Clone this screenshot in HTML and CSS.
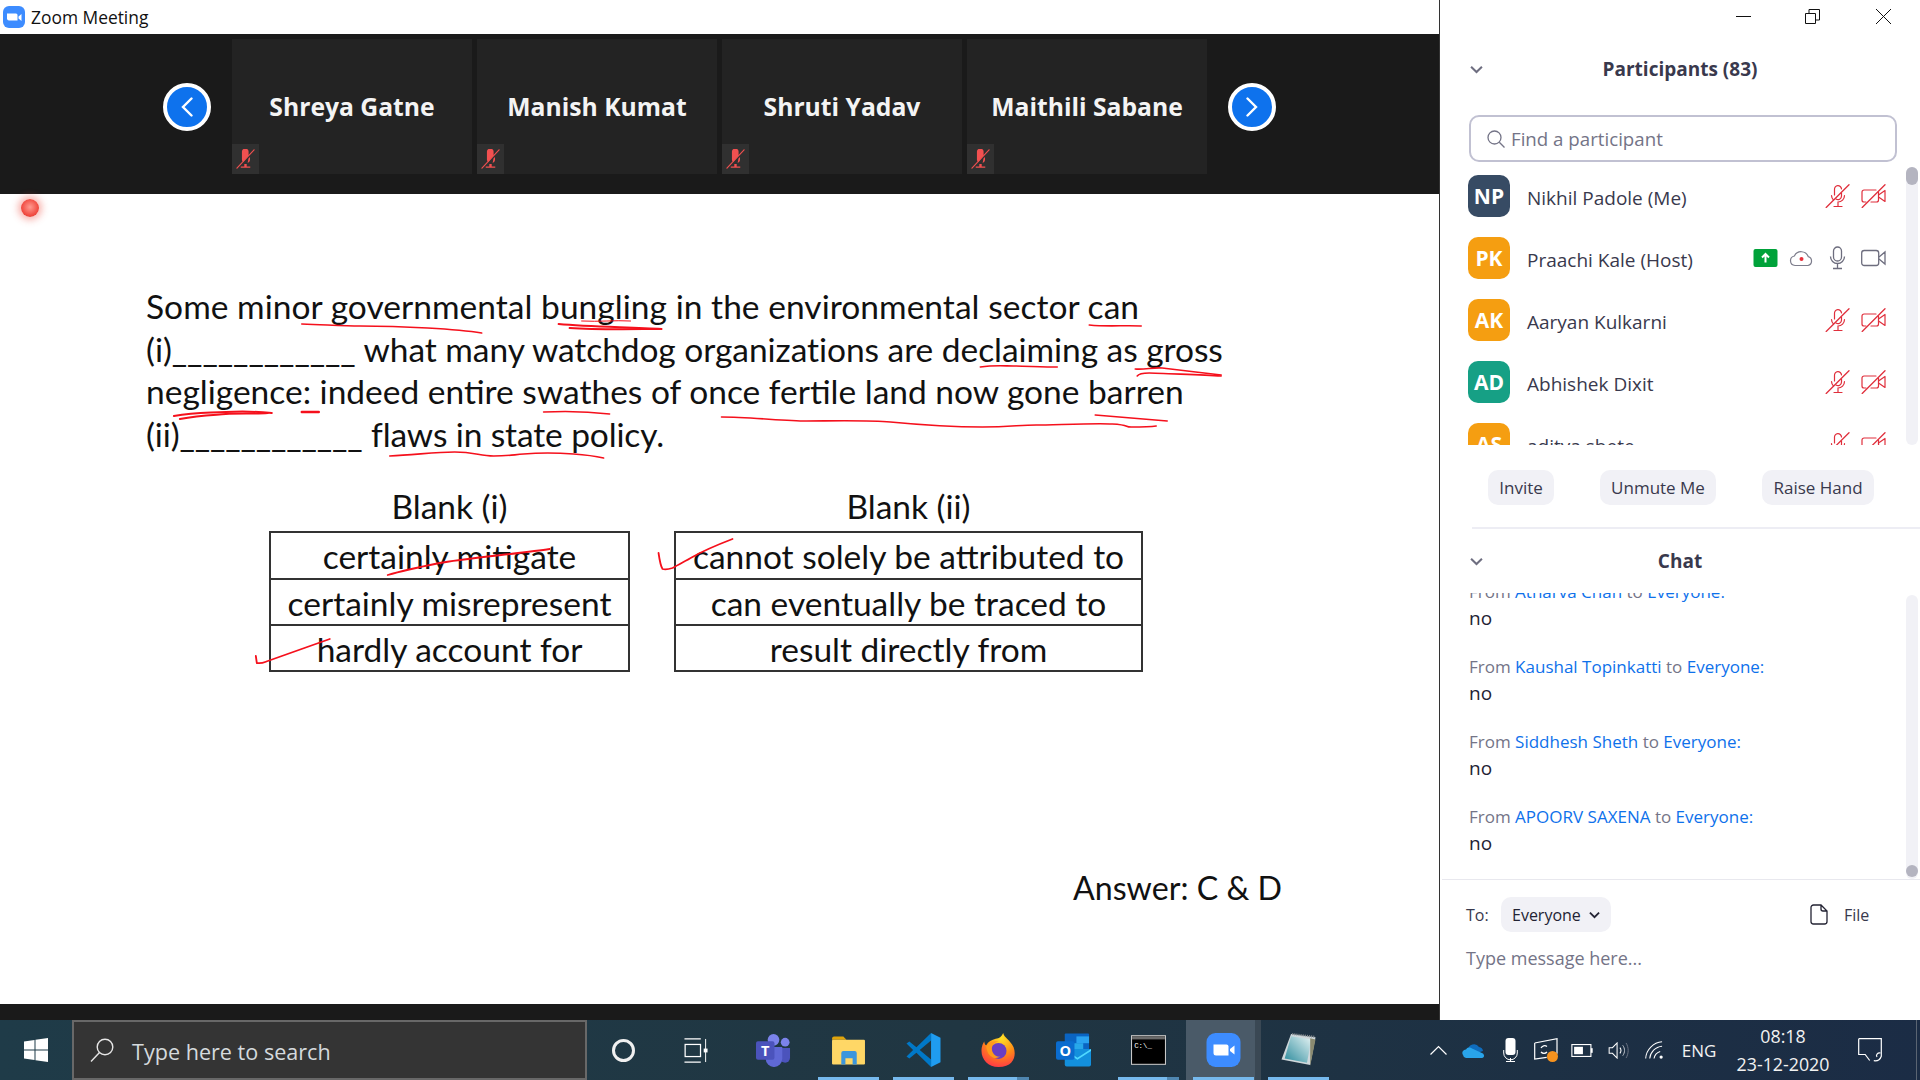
FILE: index.html
```html
<!DOCTYPE html>
<html lang="en">
<head>
<meta charset="utf-8">
<title>Zoom Meeting</title>
<link rel="stylesheet" href="styles.css">
</head>
<body>
<svg class="defs" width="0" height="0" aria-hidden="true">
  <symbol id="mic-off" viewBox="0 0 24 24">
    <g fill="none" stroke="#e02f3c" stroke-width="1.2" stroke-linecap="round">
      <path d="M9 11V5.5a3.5 3.5 0 0 1 7-.6M16 9v3a3.5 3.5 0 0 1-5.5 3"/>
      <path d="M6 11.5a6.5 6.5 0 0 0 2 4.500M19 11.500a6.500 6.500 0 0 1-6.500 6.500v4M8.500 22.500h8"/>
      <path d="M0.700 23.500 23.500 0.700" stroke-width="1.300"/>
    </g>
  </symbol>
  <symbol id="cam-off" viewBox="0 0 25 24">
    <g fill="none" stroke="#e02f3c" stroke-width="1.200" stroke-linecap="round" stroke-linejoin="round">
      <path d="M15 6H3a2 2 0 0 0-2 2v8a2 2 0 0 0 2 2h2M10 18h5.500a2 2 0 0 0 2-2V8"/>
      <path d="M17.500 11 24 6.500v11L17.500 13"/>
      <path d="M1.200 23.500 24 0.700" stroke-width="1.300"/>
    </g>
  </symbol>
  <symbol id="tile-mute" viewBox="0 0 16 20" preserveAspectRatio="none">
    <path d="M5 2.500a2.800 2.800 0 0 1 5.600 0v4L6 13a3 3 0 0 1-1-2.400z" fill="#f25050"/>
    <path d="M7 15h2v2.500h3v1.300H4v-1.300h3z M10.500 9.500l1.300-1.500v3a3.500 3.500 0 0 1-2 3z" fill="#f25050"/>
    <path d="M0.500 19.500 15.500 0.500" stroke="#f25050" stroke-width="1.100"/>
  </symbol>
  <symbol id="chev" viewBox="0 0 12 8">
    <path d="M1 1.500 6 6.300 11 1.500" fill="none" stroke="#6e6e80" stroke-width="1.900"/>
  </symbol>
</svg>

<div class="window">
  <main class="meeting">
    <header class="titlebar">
      <svg class="zoom-mini" viewBox="0 0 22 22"><rect width="22" height="22" rx="6" fill="#3d8cff"/><path d="M4 7.500h9a1.500 1.500 0 0 1 1.500 1.500v5.500H6A2 2 0 0 1 4 12.500z" fill="#fff"/><path d="M15.500 10.500 18.500 8v7l-3-2.500z" fill="#fff"/></svg>
      <span class="title-text">Zoom Meeting</span>
    </header>
    <section class="strip">
      <button class="nav-btn"><svg viewBox="0 0 12 20" class="nav-ico"><path d="M10.500 1.500 2 10l8.500 8.500" fill="none" stroke="#fff" stroke-width="2.400" stroke-linecap="round"/></svg></button>
      <div class="tile"><span class="tile-name">Shreya Gatne</span><span class="tile-mute"><svg><use href="#tile-mute"/></svg></span></div>
      <div class="tile"><span class="tile-name">Manish Kumat</span><span class="tile-mute"><svg><use href="#tile-mute"/></svg></span></div>
      <div class="tile"><span class="tile-name">Shruti Yadav</span><span class="tile-mute"><svg><use href="#tile-mute"/></svg></span></div>
      <div class="tile"><span class="tile-name">Maithili Sabane</span><span class="tile-mute"><svg><use href="#tile-mute"/></svg></span></div>
      <button class="nav-btn nav-next"><svg viewBox="0 0 12 20" class="nav-ico"><path d="M1.500 1.500 10 10l-8.500 8.500" fill="none" stroke="#fff" stroke-width="2.400" stroke-linecap="round"/></svg></button>
    </section>
    <section class="slide">
      <div class="rec-dot"></div>
      <div class="passage">
        <div class="line-wide">Some minor governmental bungling in the environmental sector can</div>
        <div class="line-tight">(i)____________ what many watchdog organizations are declaiming as gross</div>
        <div>negligence: indeed entire swathes of once fertile land now gone barren</div>
        <div class="line-tighter">(ii)____________ flaws in state policy.</div>
      </div>
      <div class="blanks">
        <div class="blank blank-a">
          <div class="blank-head">Blank (i)</div>
          <div class="choices">
            <div class="choice">certainly mitigate</div>
            <div class="choice">certainly misrepresent</div>
            <div class="choice">hardly account for</div>
          </div>
        </div>
        <div class="blank blank-b">
          <div class="blank-head">Blank (ii)</div>
          <div class="choices">
            <div class="choice">cannot solely be attributed to</div>
            <div class="choice">can eventually be traced to</div>
            <div class="choice">result directly from</div>
          </div>
        </div>
      </div>
      <div class="answer">Answer: C &amp; D</div>
      <svg class="ink" viewBox="0 194 1440 810" preserveAspectRatio="none">
        <g fill="none" stroke="#f5101c" stroke-width="1.600" stroke-linecap="round" stroke-linejoin="round">
          <path d="M302 324C330 325 345 326 360 326S410 327 428 328 470 331 482 333"/>
          <path d="M559 324C590 327 630 327 662 329" stroke-width="2"/>
          <path d="M570 328C600 330 640 329 660 329" stroke-width="2"/>
          <path d="M582 321C600 322 615 320 631 321" stroke-width="1"/>
          <path d="M174 416C195 412 205 413 226 412S262 412 272 413" stroke-width="2"/>
          <path d="M180 419C200 415 215 415 226 414S255 414 268 413" stroke-width="2"/>
          <path d="M302 412 319 412" stroke-width="2.400"/>
          <path d="M544 412C565 411 585 411 610 414"/>
          <path d="M390 456C415 455 435 452 455 452S480 456 494 456 512 455 524 454 560 453 574 454 595 456 604 458"/>
          <path d="M1090 325C1110 327 1125 325 1142 326"/>
          <path d="M981 367C995 365 1005 366 1014 366S1045 367 1058 367"/>
          <path d="M1136 369C1145 370 1155 367 1163 368S1205 373 1222 375"/>
          <path d="M1138 376C1140 373 1145 373 1150 373S1205 375 1222 376"/>
          <path d="M722 417C750 417 785 421 807 421S870 420 891 422 955 427 983 427 1020 425 1037 425 1095 423 1113 424 1125 427 1132 427 1150 427 1157 426"/>
          <path d="M1096 415 1168 421"/>
          <path d="M388 575C405 570 420 567 440 563S525 553 550 549" stroke-width="1.800"/>
          <path d="M256 656 257 663C262 664 265 662 268 661 285 655 310 646 330 639" stroke-width="1.800"/>
          <path d="M659 553C660 560 661 566 663 569 666 570 670 569 673 568 680 564 686 561 693 557 705 550 720 544 733 539" stroke-width="1.800"/>
        </g>
      </svg>
    </section>
    <div class="meeting-foot"></div>
  </main>

  <aside class="side">
    <div class="winctl">
      <svg class="ctl" viewBox="0 0 15 15"><path d="M0 7.500h15" stroke="#111" stroke-width="1"/></svg>
      <svg class="ctl" viewBox="0 0 15 15"><path d="M.5 4.500h10v10H.500zM4 4.500V.5h10.500V11H10.500" fill="none" stroke="#111"/></svg>
      <svg class="ctl" viewBox="0 0 15 15"><path d="M0 0 15 15M15 0 0 15" stroke="#111" stroke-width="1"/></svg>
    </div>
    <div class="panel-head head-people">
      <svg class="panel-chev"><use href="#chev"/></svg>
      <span class="panel-title">Participants (83)</span>
    </div>
    <div class="search">
      <svg class="search-ico" viewBox="0 0 18 18"><circle cx="7.500" cy="7.500" r="6.500" fill="none" stroke="#747487" stroke-width="1.300"/><path d="M12.300 12.300 17.500 17.500" stroke="#747487" stroke-width="1.300"/></svg>
      <span class="search-text">Find a participant</span>
    </div>
    <div class="people">
      <div class="person">
        <div class="avatar av-navy">NP</div><div class="person-name">Nikhil Padole (Me)</div>
        <div class="person-icons"><svg class="pi"><use href="#mic-off"/></svg><svg class="pi"><use href="#cam-off"/></svg></div>
      </div>
      <div class="person">
        <div class="avatar av-orange">PK</div><div class="person-name">Praachi Kale (Host)</div>
        <div class="person-icons">
          <svg class="pi" viewBox="0 0 25 24"><rect x=".5" y="3" width="24" height="18" rx="2" fill="#00a23a"/><path d="M12.500 16.500V9M9 11.500l3.500-3.500 3.500 3.500" fill="none" stroke="#fff" stroke-width="2"/></svg>
          <svg class="pi" viewBox="0 0 25 24"><path d="M6 19.500a4.800 4.800 0 0 1-.6-9.500 7.500 7.500 0 0 1 13.800.6 4.600 4.600 0 0 1-.2 8.900z" fill="none" stroke="#7d7d8c" stroke-width="1.200"/><circle cx="12.500" cy="13" r="2" fill="#e8303a"/></svg>
          <svg class="pi" viewBox="0 0 25 24"><rect x="8.500" y="1" width="8" height="14" rx="4" fill="none" stroke="#6d6d7e" stroke-width="1.300"/><path d="M5.500 10.500a7 7 0 0 0 14 0M12.500 17.500V22M8 22.500h9" fill="none" stroke="#6d6d7e" stroke-width="1.300"/></svg>
          <svg class="pi" viewBox="0 0 25 24"><rect x=".7" y="4.500" width="17" height="15" rx="2.500" fill="none" stroke="#6d6d7e" stroke-width="1.300"/><path d="M18 11 24 6v12l-6-5" fill="none" stroke="#6d6d7e" stroke-width="1.300"/></svg>
        </div>
      </div>
      <div class="person">
        <div class="avatar av-orange">AK</div><div class="person-name">Aaryan Kulkarni</div>
        <div class="person-icons"><svg class="pi"><use href="#mic-off"/></svg><svg class="pi"><use href="#cam-off"/></svg></div>
      </div>
      <div class="person">
        <div class="avatar av-green">AD</div><div class="person-name">Abhishek Dixit</div>
        <div class="person-icons"><svg class="pi"><use href="#mic-off"/></svg><svg class="pi"><use href="#cam-off"/></svg></div>
      </div>
      <div class="person">
        <div class="avatar av-orange">AS</div><div class="person-name">aditya shete</div>
        <div class="person-icons"><svg class="pi"><use href="#mic-off"/></svg><svg class="pi"><use href="#cam-off"/></svg></div>
      </div>
      <div class="scroll-thumb people-thumb"></div>
    </div>
    <div class="actions">
      <button class="act act-invite">Invite</button>
      <button class="act act-mute">Unmute Me</button>
      <button class="act act-hand">Raise Hand</button>
    </div>
    <div class="panel-head head-chat">
      <svg class="panel-chev"><use href="#chev"/></svg>
      <span class="panel-title">Chat</span>
    </div>
    <div class="chat">
      <div class="msg"><div class="msg-from">From <a>Atharva Chan</a> to <a>Everyone:</a></div><div class="msg-body">no</div></div>
      <div class="msg"><div class="msg-from">From <a>Kaushal Topinkatti</a> to <a>Everyone:</a></div><div class="msg-body">no</div></div>
      <div class="msg"><div class="msg-from">From <a>Siddhesh Sheth</a> to <a>Everyone:</a></div><div class="msg-body">no</div></div>
      <div class="msg"><div class="msg-from">From <a>APOORV SAXENA</a> to <a>Everyone:</a></div><div class="msg-body">no</div></div>
      <div class="scroll-thumb chat-thumb"></div>
    </div>
    <div class="composer">
      <div class="to-row">
        <span class="to-label">To:</span>
        <span class="to-select">Everyone <svg class="to-chev" viewBox="0 0 12 8"><path d="M1 1.500 6 6.300 11 1.500" fill="none" stroke="#232333" stroke-width="2"/></svg></span>
        <svg class="file-ico" viewBox="0 0 18 21"><path d="M3.500 1h7.500l6 6v10.500a2.500 2.500 0 0 1-2.500 2.500h-11A2.500 2.500 0 0 1 1 17.500v-14A2.500 2.500 0 0 1 3.500 1zM11 1v4a2 2 0 0 0 2 2h4" fill="none" stroke="#232333" stroke-width="1.300"/></svg>
        <span class="file-label">File</span>
      </div>
      <div class="type-here">Type message here...</div>
    </div>
  </aside>
</div>

<footer class="taskbar">
  <div class="start"><svg class="win" viewBox="0 0 24 24"><path d="M0 3.500 10.500 2v9.500H0zM11.500 1.800 24 0v11.500H11.500zM0 12.500h10.500V22L0 20.500zM11.500 12.500H24V24l-12.500-1.800z" fill="#fff"/></svg></div>
  <div class="tsearch">
    <svg class="tsearch-ico" viewBox="0 0 24 24"><circle cx="15" cy="9" r="7.800" fill="none" stroke="#e6e6e6" stroke-width="1.400"/><path d="M9.500 14.500 1 23.500" stroke="#e6e6e6" stroke-width="1.400"/></svg>
    <span class="tsearch-text">Type here to search</span>
  </div>
  <div class="slot cortana"><span class="ring"></span></div>
  <div class="slot taskview"><svg class="tv" viewBox="0 0 24 26"><path d="M0 1h17M0 25h17" stroke="#fff" stroke-width="1.300"/><rect x="0.700" y="6.700" width="16" height="12.600" fill="none" stroke="#fff" stroke-width="1.300"/><path d="M22 1v24" stroke="#fff" stroke-width="1"/><rect x="20" y="11" width="4" height="4" fill="#fff"/></svg></div>

  <div class="app">
    <svg class="app-ico" viewBox="0 0 36 34"><circle cx="30" cy="9" r="4.500" fill="#7b83eb"/><path d="M25 15h10v10a5 5 0 0 1-10 0z" fill="#4b53bc"/><circle cx="18" cy="6.500" r="6" fill="#7b83eb"/><path d="M10 14h17v12a8.500 8.500 0 0 1-17 0z" fill="#5f68d5"/><rect x="0" y="8" width="19" height="19" rx="2" fill="#4b53bc"/><text x="9.500" y="23" class="svg-t teams-t">T</text></svg>
  </div>
  <div class="app running">
    <svg class="app-ico" viewBox="0 0 34 30"><path d="M1 4a2 2 0 0 1 2-2h9l3 3h-14z" fill="#e0a40a"/><rect x="1" y="5" width="32" height="24" rx="1" fill="#ffd766"/><path d="M10 29V18a2 2 0 0 1 2-2h11a2 2 0 0 1 2 2v11h-4v-6h-7v6z" fill="#3c96dc"/></svg>
  </div>
  <div class="app running">
    <svg class="app-ico" viewBox="0 0 36 36"><path d="M26 0 36 5v26L26 36z" fill="#1f9cf0"/><path d="M26 0 10.500 15 3 9 0 11l7 7-7 7 3 2 7.500-6L26 36v-8L14 18 26 8z" fill="#0078c8"/></svg>
  </div>
  <div class="app running split">
    <svg class="app-ico" viewBox="0 0 36 36">
      <defs><radialGradient id="ff" cx=".6" cy=".15" r=".95"><stop offset="0" stop-color="#ffe226"/><stop offset=".5" stop-color="#ff8a16"/><stop offset="1" stop-color="#ff2a4f"/></radialGradient></defs>
      <path d="M23 0c1 5 7 7 11 15 3 8 1 21-16 21C7 36 0 28 0 19c0-5 2-9 3-10 0 2 1 4 2 4 2-4 6-6 10-7 4 0 6-2 8-6z" fill="url(#ff)"/>
      <circle cx="18" cy="19" r="8.500" fill="#6a3ec2"/>
      <path d="M5 14c3-5 8-6 13-5-5 1-7 4-7 8s4 9 9 8c-6 4-14 0-15-11z" fill="#ff9a1c"/>
    </svg>
  </div>
  <div class="app">
    <svg class="app-ico" viewBox="0 0 36 34"><rect x="9" y="0" width="25" height="20" rx="1" fill="#0a64c2"/><rect x="21" y="3" width="13" height="7" fill="#2aa3f0"/><rect x="15" y="10" width="13" height="8" fill="#28a8ea"/><path d="M9 16h27v16a2 2 0 0 1-2 2H11a2 2 0 0 1-2-2z" fill="#1390dd"/><path d="M9 16l13 9 14-9v2l-14 9-13-9z" fill="#50d9ff"/><rect x="0" y="8" width="19" height="19" rx="2" fill="#0a6ccf"/><text x="9.500" y="23" class="svg-t outlook-t">O</text></svg>
  </div>
  <div class="app running split">
    <svg class="app-ico" viewBox="0 0 33 28"><rect x=".5" y=".5" width="32" height="27" fill="#000" stroke="#c8c8c8"/><rect x="1" y="1" width="31" height="3" fill="#6a6a6a"/><text x="3" y="12" class="svg-t cmd-t">C:\_</text></svg>
  </div>
  <div class="app running active">
    <svg class="app-ico" viewBox="0 0 34 34"><rect width="34" height="34" rx="9" fill="#3d8cff"/><path d="M7 11.500h13a2 2 0 0 1 2 2v9H9.500A2.500 2.500 0 0 1 7 20z" fill="#fff"/><path d="M23.500 16 28 12.500v9L23.500 18z" fill="#fff"/></svg>
  </div>
  <div class="app running">
    <svg class="app-ico" viewBox="0 0 32 32"><defs><linearGradient id="np" x1="0" y1="1" x2="1" y2="0"><stop offset="0" stop-color="#2a8a9c"/><stop offset="1" stop-color="#e6f4f4"/></linearGradient></defs><path d="M9 1 32 4 27 30 0 25z" fill="#cfd8dc"/><path d="M9 3 28 6 24 28 3 24z" fill="url(#np)"/><path d="M10 1 31 3.500" stroke="#8a8f92" stroke-width="2" stroke-dasharray="1 1"/><path d="M27 5 32 6 27 31z" fill="#8a8a70"/></svg>
  </div>

  <div class="tray">
    <div class="tslot"><svg class="t-chev" viewBox="0 0 17 10"><path d="M.5 9.500 8.500 1.500l8 8" fill="none" stroke="#fff" stroke-width="1.200"/></svg></div>
    <div class="tslot"><svg class="t-od" viewBox="0 0 24 16"><path d="M6 8a6 6 0 0 1 11-3 4.500 4.500 0 0 1 4 4L9 13z" fill="#0f6cbd"/><path d="M1 13a3.500 3.500 0 0 1 3-5.500 4 4 0 0 1 6-1l11 5c2 2 1 4.500-1 4.500H4a3.500 3.500 0 0 1-3-3z" fill="#29a4ea"/></svg></div>
    <div class="tslot"><svg class="t-mic" viewBox="0 0 15 24"><rect x="2.500" y="0" width="10" height="17" rx="3" fill="#fff"/><path d="M.7 12v3a6.800 6.800 0 0 0 13.600 0v-3M7.500 20v3M3 23.500h9" fill="none" stroke="#fff" stroke-width="1"/></svg></div>
    <div class="tslot"><svg class="t-disp" viewBox="0 0 24 24"><path d="M.7 5 23 .7v15M.7 5v16l12-1.700" fill="none" stroke="#fff" stroke-width="1.200"/><path d="M7 10a4 4 0 0 1 6-1.500M13 14a4 4 0 0 1-6 0" fill="none" stroke="#fff" stroke-width="1.200"/><circle cx="18.500" cy="18.500" r="5.500" fill="#f7931e"/></svg></div>
    <div class="tslot"><svg class="t-batt" viewBox="0 0 23 14"><rect x=".6" y=".6" width="20.500" height="12.800" fill="none" stroke="#fff" stroke-width="1.200"/><rect x="3" y="3" width="9.500" height="8" fill="#fff"/><rect x="21" y="4.500" width="2" height="5" fill="#fff"/></svg></div>
    <div class="tslot"><svg class="t-spk" viewBox="0 0 21 18"><path d="M.6 6h3.500L9 1v16l-4.900-5H.6z" fill="none" stroke="#fff" stroke-width="1.100"/><path d="M12 6c1.500 2 1.500 4 0 6" fill="none" stroke="#fff" stroke-width="1.100"/><path d="M15 3.500c2.500 3.500 2.500 7.500 0 11" fill="none" stroke="#c8ccd2" stroke-width="1"/><path d="M18.500 1c3 5 3 11 0 16" fill="none" stroke="#6e7686" stroke-width="1"/></svg></div>
    <div class="tslot"><svg class="t-wifi" viewBox="0 0 20 19"><path d="M.7 18.500C1 9 9 1.500 18 .8M5 18.500C5.500 12 11 6 18 5.500M9.500 18.500C10 15 13 12 16 11" fill="none" stroke="#fff" stroke-width="1.100"/><circle cx="17" cy="17" r="1.700" fill="#fff"/></svg></div>
    <div class="t-eng">ENG</div>
    <div class="t-clock"><div>08:18</div><div>23-12-2020</div></div>
    <div class="t-note"><svg class="t-note-ico" viewBox="0 0 24 24"><path d="M.7.700h22.600v17.500c-1 3-4 5-7.500 4.500M.7.700V16.500h6.500l4.500 6" fill="none" stroke="#fff" stroke-width="1.200"/><path d="M22.500 15c-3-.5-5 2-3.500 4" fill="none" stroke="#fff" stroke-width="1.200"/></svg></div>
    <div class="t-peek"></div>
  </div>
</footer>
</body>
</html>
```
FILE: styles.css
```css
* { box-sizing: border-box; }
html, body { margin: 0; padding: 0; height: 100%; }
body { width: 1920px; height: 1080px; overflow: hidden; display: flex; flex-direction: column; background: #fff; font-family: "Open Sans", "Liberation Sans", sans-serif; color: #232333; }
.defs { position: absolute; }
button { font: inherit; border: 0; padding: 0; }

.window { display: flex; height: 1020px; flex: none; }
.meeting { width: 1440px; display: flex; flex-direction: column; border-right: 1px solid #333; }

.titlebar { height: 34px; display: flex; align-items: center; padding-left: 3px; gap: 6px; flex: none; }
.zoom-mini { width: 22px; height: 22px; }
.title-text { font-size: 17.400px; color: #111; }

.strip { height: 160px; flex: none; background: #1a1a1a; display: flex; align-items: flex-start; padding: 5px 0 0 163px; gap: 5px; position: relative; }
.nav-btn { width: 48px; height: 48px; border-radius: 50%; background: #0e72ed; border: 4px solid #fff; margin-top: 44px; display: flex; align-items: center; justify-content: center; margin-right: 16px; flex: none; }
.nav-next { margin-left: 16px; margin-right: 0; }
.nav-ico { width: 12px; height: 20px; }
.tile { width: 240px; height: 135px; background: #232323; position: relative; display: flex; align-items: center; justify-content: center; flex: none; }
.tile-name { color: #f4f4f4; font-weight: 700; font-size: 24.700px; }
.tile-mute { position: absolute; left: 0; bottom: 0; width: 27px; height: 30px; background: #303030; display: flex; align-items: center; justify-content: center; }
.tile-mute svg { width: 19px; height: 20px; }

.slide { flex: 1; position: relative; background: #fff; padding: 91px 0 0 146px; font-family: Lato, "Open Sans", sans-serif; color: #111; font-size: 33.500px; }
.rec-dot { position: absolute; left: 21px; top: 5px; width: 18px; height: 18px; border-radius: 50%; background: radial-gradient(circle at 50% 45%, #ff9a90, #f0483e 65%, #b8443c); box-shadow: 0 0 7px 3px rgba(240,90,80,.45); }
.passage { line-height: 42.700px; white-space: nowrap; }
.line-wide { letter-spacing: .04px; }
.line-tight { letter-spacing: -.05px; }
.line-tighter { letter-spacing: -.12px; }
.blanks { display: flex; gap: 44px; margin: 30px 0 0 123px; }
.blank-a { width: 361px; }
.blank-b { width: 469px; }
.blank-head { text-align: center; height: 45px; line-height: 40px; }
.choices { border: 2px solid #333; }
.choice { height: 46.300px; line-height: 46px; text-align: center; border-top: 2px solid #333; white-space: nowrap; }
.choice:first-child { border-top: 0; height: 45px; }
.answer { margin: 196px 0 0 927px; white-space: nowrap; font-size: 32.200px; }
.ink { position: absolute; inset: 0; width: 100%; height: 100%; pointer-events: none; }

.meeting-foot { height: 16px; flex: none; background: #1a1a1a; }

.side { width: 480px; display: flex; flex-direction: column; background: #fff; }
.winctl { height: 34px; flex: none; display: flex; padding: 9px 0 0 296px; gap: 54px; }
.ctl { width: 15px; height: 15px; }
.ctl:last-child { margin-left: 2px; }
.panel-head { flex: none; display: flex; align-items: center; justify-content: center; position: relative; }
.head-people { height: 70px; }
.head-chat { height: 66px; border-top: 2px solid #ededf4; margin-left: 32px; padding-right: 32px; }
.panel-chev { position: absolute; left: 30px; top: 50%; width: 13px; height: 9px; margin-top: -4px; }
.head-chat .panel-chev { left: -2px; }
.panel-title { font-weight: 700; font-size: 19px; color: #39394d; }
.search { flex: none; margin: 11px 0 3px 29px; width: 428px; height: 47px; border: 2px solid #c1c1d2; border-radius: 10px; display: flex; align-items: center; padding-left: 16px; gap: 6px; }
.search-ico { width: 18px; height: 18px; }
.search-text { font-size: 18.700px; color: #747487; }
.people { flex: none; height: 280px; overflow: hidden; position: relative; }
.person { height: 62px; display: flex; align-items: center; padding: 0 34px 0 28px; }
.avatar { width: 42px; height: 42px; border-radius: 10px; color: #fff; font-weight: 700; font-size: 21px; display: flex; align-items: center; justify-content: center; flex: none; }
.av-navy { background: #374b64; }
.av-orange { background: #f59e11; }
.av-green { background: #16a085; }
.person-name { margin: 3px 0 0 17px; font-size: 19px; color: #39394d; white-space: nowrap; }
.person-icons { margin-left: auto; display: flex; gap: 11px; }
.pi { width: 25px; height: 24px; }
.scroll-thumb { position: absolute; right: 2px; width: 12px; border-radius: 6px; background: #b4b4c0; z-index: 1; }
.people::after, .chat::after { content: ""; position: absolute; right: 2px; width: 12px; top: 2px; bottom: 0; border-radius: 6px; background: #f1f1f6; }
.people-thumb { top: 2px; height: 18px; }
.chat-thumb { bottom: 2px; height: 12px; }
.actions { flex: none; display: flex; gap: 46px; padding: 25px 0 22px 48px; }
.act { height: 35px; border-radius: 10px; background: #f1f1f6; font-size: 17px; color: #39394d; }
.act-invite { width: 66px; }
.act-mute { width: 116px; }
.act-hand { width: 112px; }
.chat { flex: none; height: 286px; overflow: hidden; position: relative; display: flex; flex-direction: column; justify-content: flex-end; padding: 0 0 22px 29px; font-size: 17px; line-height: 27px; }
.msg { margin-top: 21px; flex: none; }
.msg-from { color: #747487; }
.msg-from a { color: #0e71eb; }
.msg-body { color: #232333; font-size: 19px; }
.composer { flex: 1; border-top: 1px solid #e8e8ee; margin-left: 2px; padding: 17px 0 0 24px; }
.to-row { display: flex; align-items: center; height: 35px; font-size: 16px; }
.to-label { color: #39394d; width: 35px; }
.to-select { width: 110px; height: 35px; border-radius: 10px; background: #f1f1f6; display: flex; align-items: center; padding-left: 11px; gap: 8px; color: #232333; }
.to-chev { width: 11px; height: 8px; }
.file-ico { width: 18px; height: 21px; margin-left: 199px; }
.file-label { margin-left: 16px; color: #39394d; }
.type-here { margin-top: 9px; line-height: 34px; font-size: 18px; color: #747487; }

.taskbar { height: 60px; flex: none; display: flex; align-items: center; background: linear-gradient(90deg, #1f3b48 0%, #203642 50%, #1b2c45 100%); position: relative; }
.start { width: 72px; height: 60px; display: flex; align-items: center; justify-content: center; flex: none; }
.win { width: 24px; height: 24px; }
.tsearch { width: 515px; height: 60px; flex: none; background: #343434; border: 2px solid #686868; display: flex; align-items: center; padding: 0 0 0 16px; gap: 18px; }
.tsearch-ico { width: 24px; height: 24px; }
.tsearch-text { font-size: 21.600px; color: #d5dadd; padding-top: 3px; }
.slot { height: 60px; display: flex; align-items: center; justify-content: center; flex: none; }
.cortana { width: 73px; }
.ring { width: 23px; height: 23px; border-radius: 50%; border: 3px solid #f0f0f0; }
.taskview { width: 76px; padding-right: 4px; }
.tv { width: 24px; height: 25px; }
.app { width: 75px; height: 60px; flex: none; display: flex; align-items: center; justify-content: center; position: relative; }
.app-ico { width: 35px; height: 34px; }
.app.running::after { content: ""; position: absolute; left: 7px; right: 7px; bottom: 0; height: 3px; background: #76b9ed; }
.app.split::before { content: ""; position: absolute; right: 7px; width: 12px; bottom: 0; height: 3px; background: #4f86b0; z-index: 1; }
.app.active { background: #4a5a68; box-shadow: inset -6px 0 0 #3a4854; }
.svg-t { font-family: "Open Sans", sans-serif; font-weight: 700; fill: #fff; text-anchor: middle; }
.teams-t, .outlook-t { font-size: 15px; }
.cmd-t { font-size: 7px; text-anchor: start; font-family: "Liberation Mono", monospace; font-weight: 400; }
.tray { flex: 1; height: 60px; display: flex; align-items: center; color: #f2f2f2; padding-left: 84px; position: relative; }
.tslot { width: 36px; height: 60px; display: flex; align-items: center; justify-content: center; flex: none; }
.t-chev { width: 17px; height: 10px; }
.t-od { width: 24px; height: 16px; }
.t-mic { width: 15px; height: 24px; }
.t-disp { width: 24px; height: 24px; }
.t-batt { width: 22px; height: 13px; }
.t-spk { width: 21px; height: 17px; }
.t-wifi { width: 19px; height: 18px; }
.t-eng { width: 54px; text-align: center; font-size: 17px; flex: none; }
.t-clock { width: 114px; text-align: center; font-size: 17.800px; line-height: 28px; flex: none; }
.t-note { width: 60px; display: flex; justify-content: center; flex: none; }
.t-note-ico { width: 24px; height: 24px; }
.t-peek { width: 1px; height: 60px; background: #5a6472; margin-left: 16px; flex: none; }
```
